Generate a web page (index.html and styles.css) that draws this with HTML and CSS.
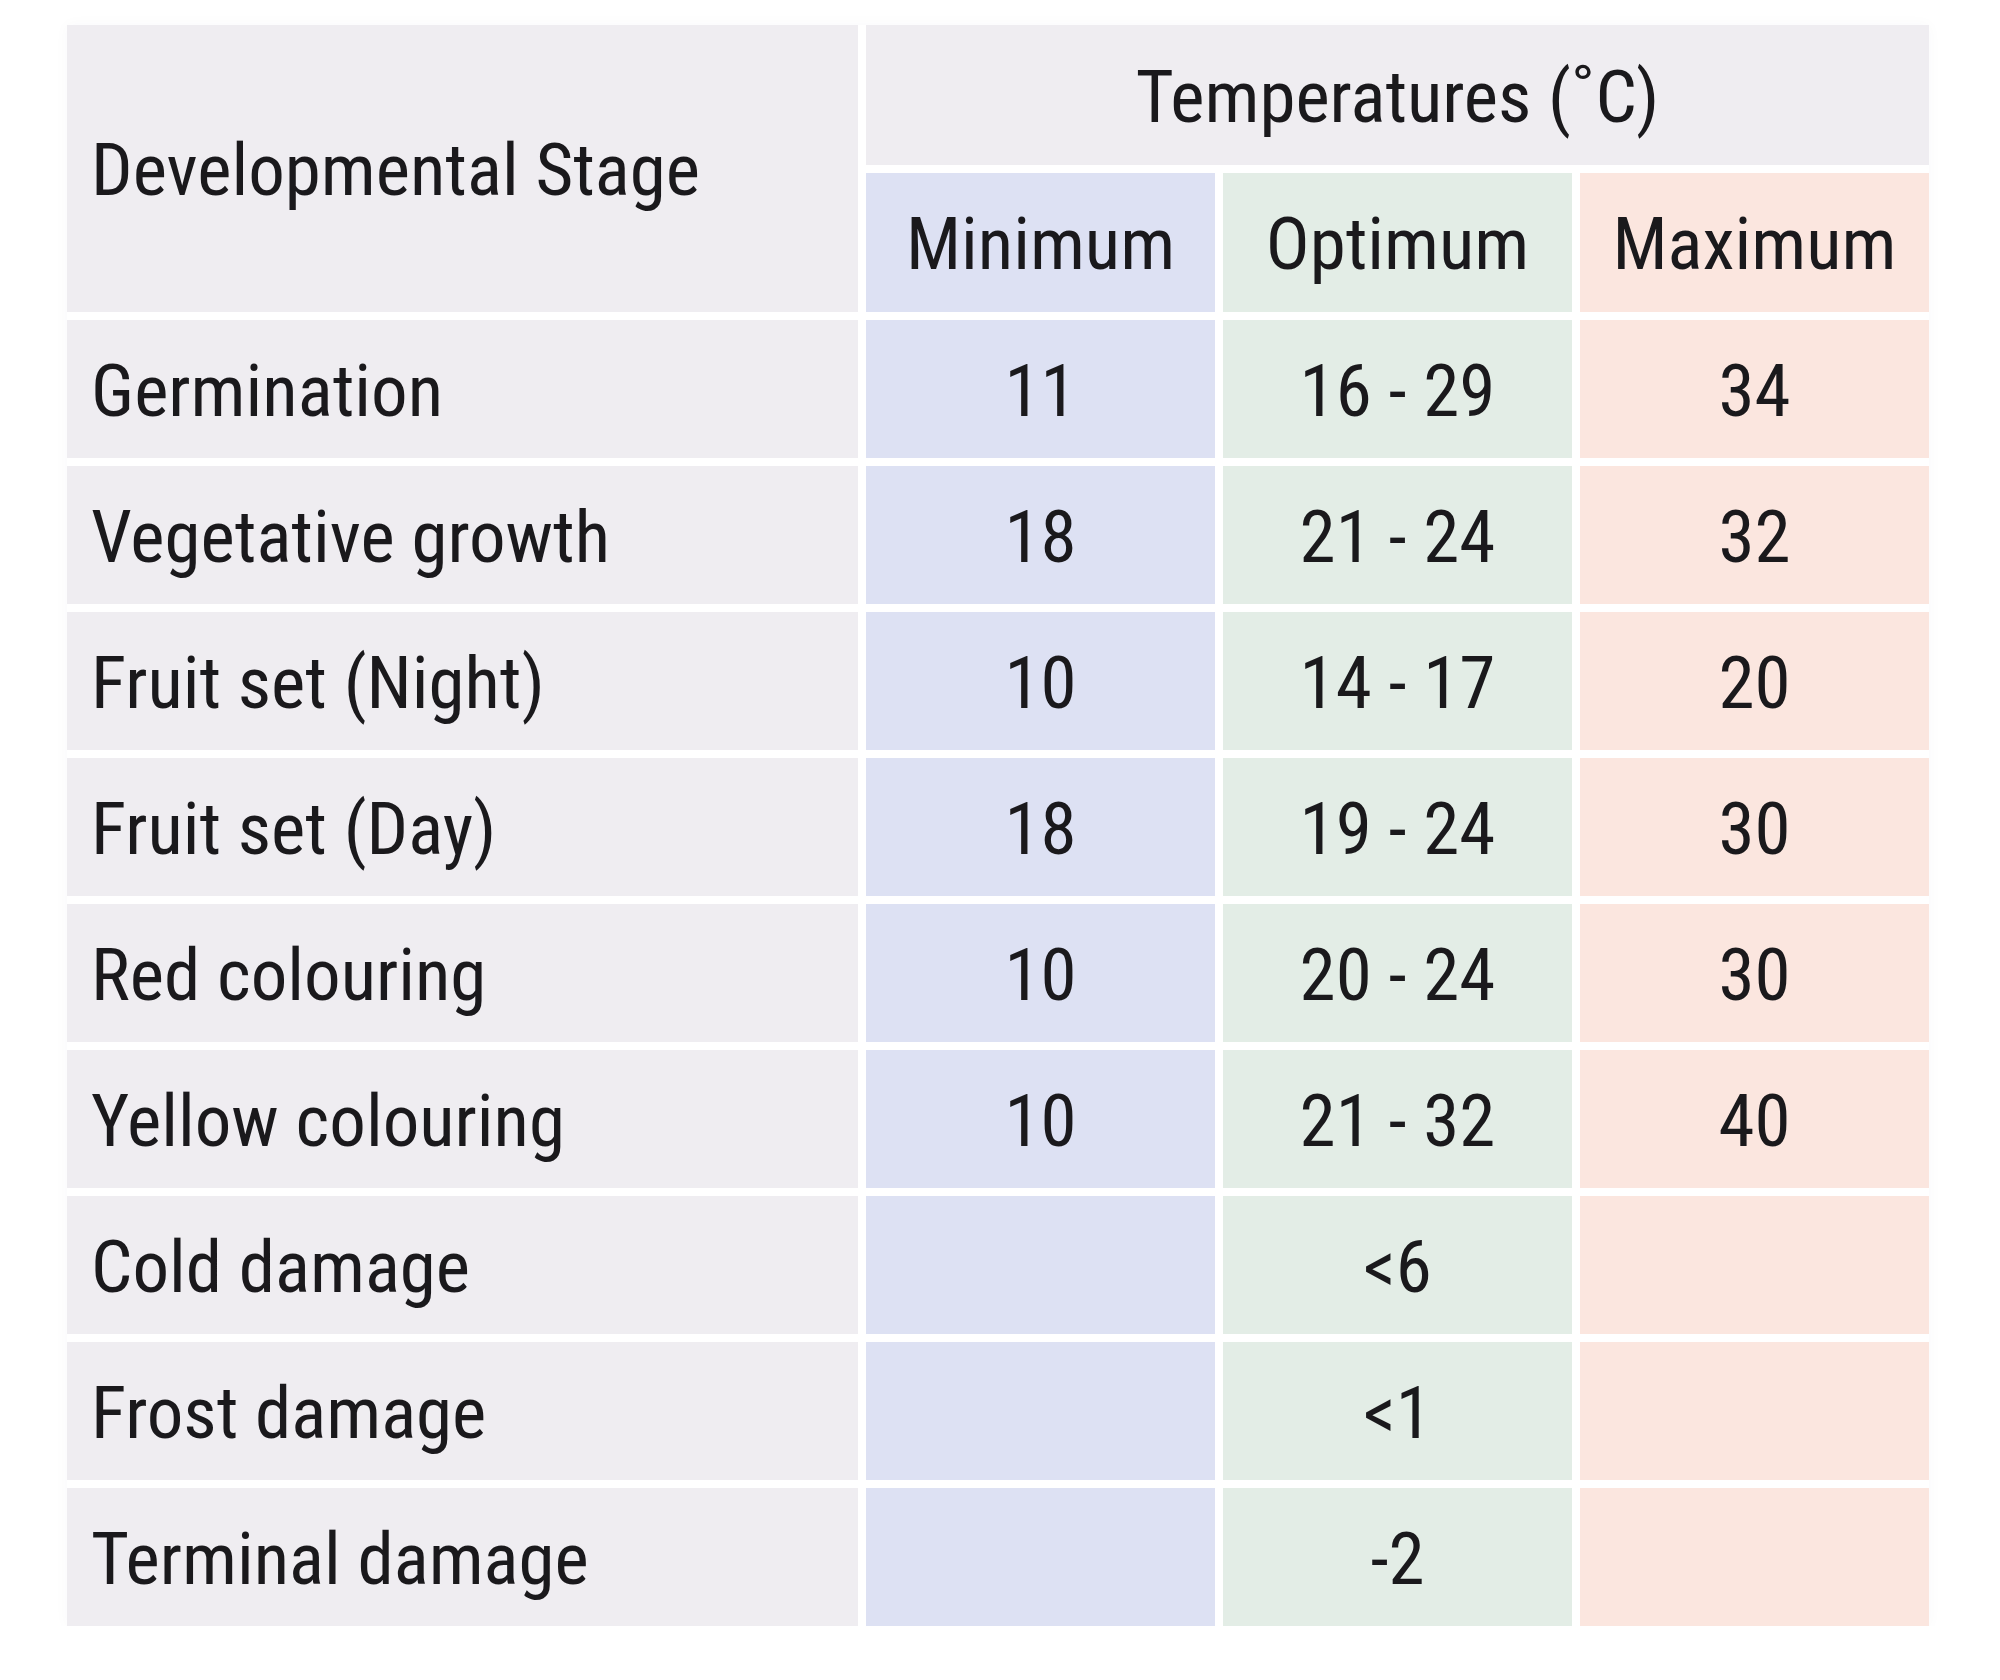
FILE: index.html
```html
<!DOCTYPE html>
<html lang="en">
<head>
<meta charset="utf-8">
<title>Temperatures by developmental stage</title>
<link rel="stylesheet" href="styles.css">
</head>
<body>
<div class="temp-table">
  <div class="cell stage head-stage">Developmental Stage</div>
  <div class="cell head-temp">Temperatures (˚C)</div>
  <div class="cell min">Minimum</div>
  <div class="cell opt">Optimum</div>
  <div class="cell max">Maximum</div>

  <div class="cell stage">Germination</div>
  <div class="cell min">11</div>
  <div class="cell opt">16 - 29</div>
  <div class="cell max">34</div>

  <div class="cell stage">Vegetative growth</div>
  <div class="cell min">18</div>
  <div class="cell opt">21 - 24</div>
  <div class="cell max">32</div>

  <div class="cell stage">Fruit set (Night)</div>
  <div class="cell min">10</div>
  <div class="cell opt">14 - 17</div>
  <div class="cell max">20</div>

  <div class="cell stage">Fruit set (Day)</div>
  <div class="cell min">18</div>
  <div class="cell opt">19 - 24</div>
  <div class="cell max">30</div>

  <div class="cell stage">Red colouring</div>
  <div class="cell min">10</div>
  <div class="cell opt">20 - 24</div>
  <div class="cell max">30</div>

  <div class="cell stage">Yellow colouring</div>
  <div class="cell min">10</div>
  <div class="cell opt">21 - 32</div>
  <div class="cell max">40</div>

  <div class="cell stage">Cold damage</div>
  <div class="cell min"></div>
  <div class="cell opt">&lt;6</div>
  <div class="cell max"></div>

  <div class="cell stage">Frost damage</div>
  <div class="cell min"></div>
  <div class="cell opt">&lt;1</div>
  <div class="cell max"></div>

  <div class="cell stage">Terminal damage</div>
  <div class="cell min"></div>
  <div class="cell opt">-2</div>
  <div class="cell max"></div>
</div>
</body>
</html>
```

FILE: styles.css
```css
html, body {
  margin: 0;
  padding: 0;
  background: #ffffff;
}

body {
  font-family: "Roboto Condensed", Roboto, "Liberation Sans", sans-serif;
  font-stretch: condensed;
  color: #1a191c;
}

.temp-table {
  display: grid;
  grid-template-columns: 791px 349px 349px 349px;
  grid-template-rows: 140px 139px repeat(9, 138px);
  gap: 8px;
  margin: 25px 0 0 67px;
  width: max-content;
  background: #ffffff;
  box-shadow: 0 0 14px rgba(60, 40, 80, 0.03);
}

.cell {
  display: flex;
  align-items: center;
  justify-content: center;
  padding-top: 4px;
  font-size: 73px;
  line-height: 1;
  white-space: nowrap;
}

.stage {
  background: #efedf1;
  justify-content: flex-start;
  padding-left: 24px;
}

.head-stage {
  grid-row: span 2;
}

.head-temp {
  grid-column: span 3;
  background: #efedf1;
}

.min {
  background: #dde1f3;
}

.opt {
  background: #e3ede6;
}

.max {
  background: #fbe6df;
}
```
